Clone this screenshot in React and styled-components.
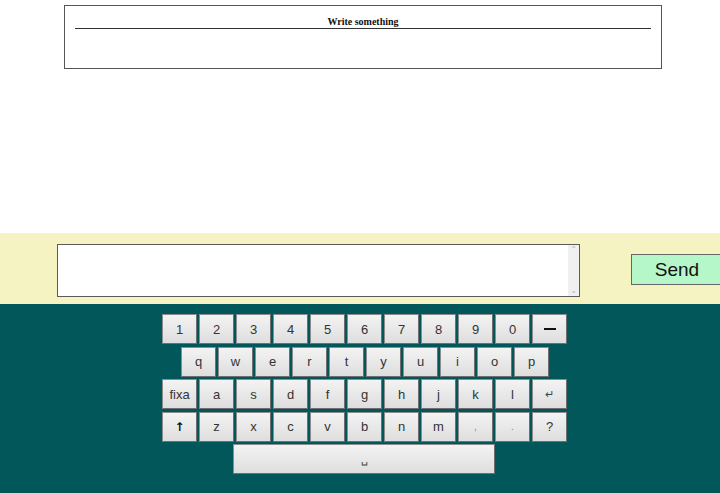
import React, { useState } from 'react';
import styled, { createGlobalStyle } from 'styled-components';

const rows = [
    { offset: 0, keys: ['1', '2', '3', '4', '5', '6', '7', '8', '9', '0', 'back'] },
    { offset: 19, keys: ['q', 'w', 'e', 'r', 't', 'y', 'u', 'i', 'o', 'p'] },
    { offset: 0, keys: ['fixa', 'a', 's', 'd', 'f', 'g', 'h', 'j', 'k', 'l', 'enter'] },
    { offset: 0, keys: ['shift', 'z', 'x', 'c', 'v', 'b', 'n', 'm', ',', '.', '?'] },
];

const labelFor = (k) => {
    if (k === 'back') return <BackBar />;
    if (k === 'enter') return <Small>↵</Small>;
    if (k === 'shift') return <Shift>↑</Shift>;
    if (k === ',' || k === '.') return <Faint>{ k }</Faint>;
    return k;
};

const App = () => {
    const [text, settext] = useState("");

    const handleKey = (k) => {
        if (k === 'back') settext(t => t.slice(0, -1));
        else if (k === 'enter') settext(t => t + "\n");
        else if (k === 'shift' || k === 'fixa') return;
        else settext(t => t + k);
    };

    return (
        <React.Fragment>
            <GlobalStyle />
            <Page>
                <TopArea>
                    <MessageBox>
                        <MessageHead>Write something</MessageHead>
                    </MessageBox>
                </TopArea>
                <InputBand>
                    <InputWrap>
                        <Input value={ text } onChange={ e => settext(e.target.value) } />
                        <ScrollArrow top>⌃</ScrollArrow>
                        <ScrollArrow>⌄</ScrollArrow>
                    </InputWrap>
                    <SendButton>Send</SendButton>
                </InputBand>
                <Keyboard>
                    { rows.map((row, i) => (
                        <KeyRow key={ i } offset={ row.offset }>
                            { row.keys.map(k => (
                                <Key key={ k } onClick={ () => handleKey(k) }>{ labelFor(k) }</Key>
                            )) }
                        </KeyRow>
                    )) }
                    <KeyRow offset={ 71 }>
                        <Key wide onClick={ () => handleKey(' ') }><Small>␣</Small></Key>
                    </KeyRow>
                </Keyboard>
            </Page>
        </React.Fragment>
    );
};

export default App;

const GlobalStyle = createGlobalStyle`
    html, body {
        margin: 0;
        padding: 0;
        height: 100%;
        overflow: hidden;
    }
    #root {
        height: 100%;
    }
`;

const Page = styled.div`
    display: flex;
    flex-direction: column;
    height: 100vh;
    background: #ffffff;
`;

const TopArea = styled.div`
    height: 233px;
    padding: 5px 0 0 64px;
    box-sizing: border-box;
`;

const MessageBox = styled.div`
    width: 598px;
    height: 64px;
    box-sizing: border-box;
    border: 1px solid #555555;
    padding: 0 10px;
`;

const MessageHead = styled.div`
    font-family: "Liberation Serif", "Times New Roman", serif;
    font-weight: bold;
    font-size: 10px;
    color: #111111;
    text-align: center;
    padding-top: 10px;
    padding-bottom: 1px;
    border-bottom: 1px solid #333333;
    line-height: 11px;
`;

const InputBand = styled.div`
    height: 71px;
    background: #f5f3c1;
    display: flex;
    align-items: flex-start;
    box-sizing: border-box;
    padding: 11px 0 0 57px;
`;

const InputWrap = styled.div`
    position: relative;
    flex-shrink: 0;
    display: flex;
`;

const Input = styled.textarea`
    width: 523px;
    height: 53px;
    box-sizing: border-box;
    border: 1px solid #5a5a5a;
    background: #ffffff;
    box-shadow: inset -11px 0 0 #f0f0f0;
    resize: none;
    overflow-y: scroll;
    font-family: "Liberation Sans", Arial, sans-serif;
    font-size: 14px;
    padding: 2px 13px 2px 2px;
    margin: 0;
    outline: none;
`;

const ScrollArrow = styled.span`
    position: absolute;
    right: 2px;
    ${props => props.top ? "top: 2px;" : "bottom: 3px;"}
    width: 9px;
    height: 7px;
    font-family: "DejaVu Sans", sans-serif;
    font-size: 8px;
    line-height: 7px;
    text-align: center;
    color: #b0b0b0;
    pointer-events: none;
`;

const SendButton = styled.button`
    margin-left: 51px;
    margin-top: 10px;
    width: 92px;
    flex-shrink: 0;
    height: 31px;
    box-sizing: border-box;
    border: 1px solid #666666;
    background: #b6f7ca;
    font-family: "Liberation Sans", Arial, sans-serif;
    font-size: 19px;
    color: #111111;
    padding: 0;
    text-align: center;
    cursor: pointer;
`;

const Keyboard = styled.div`
    flex: 1;
    background: #02575a;
    padding: 10px 0 0 162px;
    display: flex;
    flex-direction: column;
    gap: 2.5px;
`;

const KeyRow = styled.div`
    display: flex;
    gap: 2px;
    padding-left: ${props => props.offset}px;
`;

const Key = styled.button`
    width: ${props => props.wide ? "262px" : "35px"};
    height: 30px;
    box-sizing: border-box;
    border: 1px solid #8c8c8c;
    border-right-color: #6f6f6f;
    border-bottom-color: #6f6f6f;
    background: linear-gradient(#f3f3f3, #dedede);
    font-family: "Liberation Sans", Arial, sans-serif;
    font-size: 13px;
    color: #333333;
    padding: 0;
    margin: 0;
    display: flex;
    align-items: center;
    justify-content: center;
    cursor: pointer;
`;

const Small = styled.span`
    font-size: 11px;
    color: #444444;
`;

const Shift = styled.span`
    font-family: "DejaVu Sans", sans-serif;
    font-size: 12px;
    font-weight: bold;
    color: #111111;
`;

const Faint = styled.span`
    font-size: 10px;
    color: #8a8a8a;
`;

const BackBar = styled.span`
    display: block;
    width: 12px;
    height: 2px;
    background: #111111;
`;
